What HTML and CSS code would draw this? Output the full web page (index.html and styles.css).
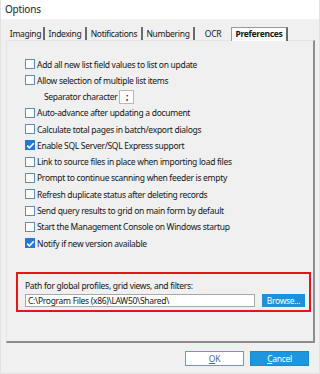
FILE: index.html
```html
<!DOCTYPE html>
<html lang="en">
  <head>
    <meta charset="UTF-8" />
    <title>Options</title>
    <link rel="stylesheet" href="styles.css">
  </head>
  <body>
    <div class="window">
      <div class="titlebar">Options</div>

      <div class="tabs">
        <div class="tab sep tab-imaging">Imaging</div>
        <div class="tab sep tab-indexing">Indexing</div>
        <div class="tab sep tab-notifications">Notifications</div>
        <div class="tab sep tab-numbering">Numbering</div>
        <div class="tab tab-ocr">OCR</div>
        <div class="tab active tab-prefs">Preferences</div>
      </div>

      <div class="panel">
        <ul class="options">
          <li class="option"><span class="box"></span>Add all new list field values to list on update</li>
          <li class="option"><span class="box"></span>Allow selection of multiple list items</li>
          <li class="option sub">Separator character <span class="sep-field">;</span></li>
          <li class="option"><span class="box"></span>Auto-advance after updating a document</li>
          <li class="option"><span class="box"></span>Calculate total pages in batch/export dialogs</li>
          <li class="option"><span class="box checked"><svg viewBox="0 0 11 11" width="11" height="11"><path d="M2.2 5.6 L4.4 7.8 L8.8 3.2" fill="none" stroke="#fff" stroke-width="1.6"/></svg></span>Enable SQL Server/SQL Express support</li>
          <li class="option"><span class="box"></span>Link to source files in place when importing load files</li>
          <li class="option"><span class="box"></span>Prompt to continue scanning when feeder is empty</li>
          <li class="option"><span class="box"></span>Refresh duplicate status after deleting records</li>
          <li class="option"><span class="box"></span>Send query results to grid on main form by default</li>
          <li class="option"><span class="box"></span>Start the Management Console on Windows startup</li>
          <li class="option"><span class="box checked"><svg viewBox="0 0 11 11" width="11" height="11"><path d="M2.2 5.6 L4.4 7.8 L8.8 3.2" fill="none" stroke="#fff" stroke-width="1.6"/></svg></span>Notify if new version available</li>
        </ul>

        <div class="path-group">
          <div class="path-label">Path for global profiles, grid views, and filters:</div>
          <div class="path-row">
            <div class="path-input">C:\Program Files (x86)\LAW50\Shared\</div>
            <div class="btn browse">Browse...</div>
          </div>
        </div>
      </div>

      <div class="footer">
        <div class="btn ok"><u>O</u>K</div>
        <div class="btn cancel"><u>C</u>ancel</div>
      </div>
    </div>
  </body>
</html>
```

FILE: styles.css
```css
* {
  margin: 0;
  padding: 0;
  box-sizing: border-box;
}

body {
  font-family: "Noto Sans", "Open Sans", sans-serif;
  font-size: 8.5px;
  letter-spacing: -0.3px;
  color: #151515;
  background: #ffffff;
}

.window {
  width: 320px;
  height: 374px;
  background: #f0f0f0;
  border-left: 1px solid #e2e2e2;
  border-right: 1px solid #e2e2e2;
  border-bottom: 1px solid #e2e2e2;
  overflow: hidden;
}

.titlebar {
  height: 19px;
  background: #ffffff;
  padding: 1px 0 0 4px;
  font-size: 10px;
  letter-spacing: -0.2px;
  line-height: 17px;
  color: #222;
}

.tabs {
  display: flex;
  margin: 8px 0 0 7px;
  height: 13px;
  align-items: flex-end;
}

.tab {
  height: 13px;
  line-height: 13px;
  text-align: center;
  white-space: nowrap;
}

.tab.sep {
  border-right: 2px solid #6a6a6a;
}

.tab-imaging { width: 37px; }
.tab-indexing { width: 42px; }
.tab-notifications { width: 56px; }
.tab-numbering { width: 52px; }
.tab-ocr { width: 36px; }

.tab.active {
  width: 57px;
  height: 14px;
  line-height: 12px;
  font-weight: 700;
  background: #fbfbfb;
  border: 1px solid #9a9a9a;
  border-right: 2px solid #6a6a6a;
  border-bottom: none;
  margin-bottom: -1px;
  position: relative;
  z-index: 1;
}

.panel {
  margin: 0 0 0 5px;
  width: 309px;
  height: 303px;
  border-top: 1px solid #e4e4e4;
  border-left: 1px solid #e4e4e4;
  border-right: 2px solid #8c8c8c;
  border-bottom: 2px solid #8c8c8c;
  padding: 15px 0 0 18px;
}

.options {
  list-style: none;
}

.option {
  display: flex;
  align-items: center;
  height: 16.27px;
  white-space: nowrap;
}

.option.sub {
  padding-left: 19px;
}

.box {
  width: 10px;
  height: 10px;
  border: 1px solid #5b8fc4;
  background: #ffffff;
  margin-right: 2px;
  flex: none;
}

.box.checked {
  background: #1f7bd6;
  border-color: #1f7bd6;
}

.box svg {
  display: block;
  margin: -1px 0 0 -1px;
}

.sep-field {
  display: inline-block;
  width: 15px;
  height: 14px;
  margin-left: 2px;
  border: 1px solid #b8b8b8;
  background: #ffffff;
  text-align: center;
  line-height: 12px;
  font-weight: 700;
}

.path-group {
  margin: 21px 0 0 -9px;
  width: 295px;
  height: 40px;
  border: 2px solid #e8141c;
  padding: 6px 0 0 7px;
}

.path-label {
  line-height: 11px;
  white-space: nowrap;
}

.path-row {
  display: flex;
  margin-top: 3px;
  gap: 7px;
}

.path-input {
  width: 230px;
  height: 13px;
  border: 1px solid #a9a9a9;
  background: #ffffff;
  padding-left: 2px;
  line-height: 11px;
  white-space: nowrap;
  overflow: hidden;
}

.btn {
  text-align: center;
  white-space: nowrap;
}

.browse {
  width: 43px;
  height: 13px;
  line-height: 13px;
  background: #1e90dc;
  color: #ffffff;
}

.footer {
  display: flex;
  justify-content: flex-end;
  gap: 6px;
  margin-top: 8px;
  padding-right: 10px;
}

.footer .btn {
  width: 59px;
  height: 15px;
  line-height: 13px;
}

.ok {
  background: #ffffff;
  border: 1px solid #4aa3e4;
  color: #3a6c9a;
}

.cancel {
  background: #1e96de;
  border: 1px solid #1a8ad0;
  color: #ffffff;
}
```
